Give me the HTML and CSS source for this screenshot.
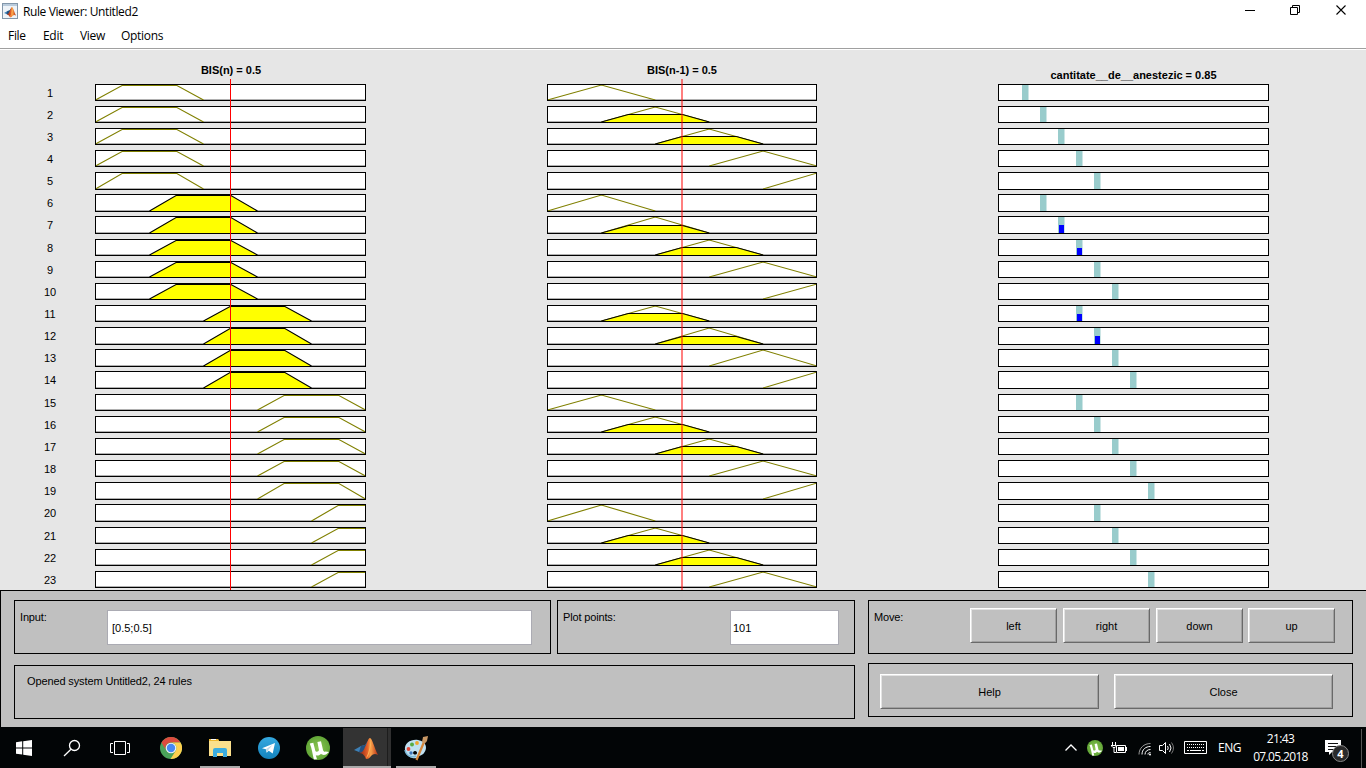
FILE: index.html
```html
<!DOCTYPE html>
<html lang="en">
<head>
<meta charset="utf-8">
<title>Rule Viewer: Untitled2</title>
<link rel="stylesheet" href="styles.css">
</head>
<body>
<svg class="defs" width="0" height="0" aria-hidden="true">
  <defs>
    <linearGradient id="flame" x1="0" y1="0" x2="1" y2="0"><stop offset="0" stop-color="#8a1f14"/><stop offset=".45" stop-color="#e5622a"/><stop offset=".62" stop-color="#f9a24a"/><stop offset="1" stop-color="#b52c14"/></linearGradient>
    <linearGradient id="sky" x1="0" y1="0" x2="0" y2="1"><stop offset="0" stop-color="#35a9e0"/><stop offset="1" stop-color="#1483bd"/></linearGradient>
    <radialGradient id="leaf"><stop offset="0" stop-color="#8cc652"/><stop offset="1" stop-color="#61a637"/></radialGradient>
    <symbol id="matlab" viewBox="0 0 24 22">
      <path d="M0 13l7-4 4-1 3-4 2-2-4 12-4 2-3-1z" fill="#3d7fb5"/>
      <path d="M7 9l4-1 3-4-2 7-4 5-3-1z" fill="#24507f"/>
      <path d="M5 16c3 0 5-3 6-6 2-3 3-9 5-9s4 9 8 17c-3-2-5-1-7 1-2 3-4 3-5 3-1-3-3-6-7-6z" fill="url(#flame)"/>
      <path d="M16 2c0 6 0 11-4 19 3-1 4-8 5-13z" fill="#fbb45a"/>
    </symbol>
    <symbol id="utorrent" viewBox="0 0 24 24">
      <circle cx="12" cy="12" r="12" fill="url(#leaf)"/>
      <path d="M3.800 7.500l3.500-.7 2.100 8.100c.4 1.500 3.800.8 3.500-1.200L11.400 6l3.600-.7 2 8.600c.3 1.400 1.500 2 2.600 1.700l3.400.5-3 2.400c-2 .8-4 .5-5-.7-1.200 1.700-3.600 2.300-5.200 1.400l1.200 4-3.100.3C6.500 18 6 13 3.800 7.500z" fill="#fff"/>
    </symbol>
  </defs>
</svg>

<main class="window">
  <header class="titlebar">
    <svg class="app-icon" width="16" height="16" viewBox="0 0 16 16"><rect x=".5" y=".5" width="15" height="15" fill="#eef3f8" stroke="#8296aa"/><path d="M1 2h14" stroke="#b9cbdc" stroke-width="2"/><use href="#matlab" x="1.500" y="3.500" width="13" height="11"/></svg>
    <h1 class="title">Rule Viewer: Untitled2</h1>
    <svg class="controls" width="110" height="20" viewBox="0 0 110 20" fill="none" stroke="#000"><path d="M0 10.500h10M45.500 7.500h7v7h-7zM47.500 7v-1.500h7v7H53"/><path d="M91.500 5.500l9 9m0-9l-9 9" stroke-width="1.100"/></svg>
  </header>
  <nav class="menu"><span class="m-file">File</span><span class="m-edit">Edit</span><span class="m-view">View</span><span class="m-options">Options</span></nav>

  <section class="figure">
    <div class="headings"><h2>BIS(n) = 0.5</h2><h2>BIS(n-1) = 0.5</h2><h2 class="output-heading">cantitate__de__anestezic = 0.85</h2></div>
    <div class="rules" id="rules"></div>
    <i class="marker first"></i><i class="marker second"></i>
  </section>

  <section class="panel">
    <div class="left-side">
      <div class="inputs">
        <div class="box input-box"><label>Input:</label><div class="field">[0.5;0.5]</div></div>
        <div class="box points-box"><label>Plot points:</label><div class="field">101</div></div>
      </div>
      <div class="box status">Opened system Untitled2, 24 rules</div>
    </div>
    <div class="right-side">
      <div class="box move-box"><label>Move:</label><div class="btn">left</div><div class="btn">right</div><div class="btn">down</div><div class="btn">up</div></div>
      <div class="box action-box"><div class="btn">Help</div><div class="btn">Close</div></div>
    </div>
  </section>
</main>

<footer class="taskbar">
  <div class="task"><svg width="16" height="16" viewBox="0 0 16 16" fill="#fff"><path d="M0 2.200L6.200 1.300v6.100H0zM7.200 1.200L16 0v7.400H7.200zM0 8.400h6.200v6.200L0 13.800zM7.200 8.400H16V16l-8.800-1.300z"/></svg></div>
  <div class="task narrow"><svg width="18" height="18" viewBox="0 0 18 18" fill="none" stroke="#fff" stroke-width="1.300"><circle cx="11.500" cy="6.500" r="5"/><path d="M8 10.200L1 17"/></svg></div>
  <div class="task narrow"><svg width="20" height="16" viewBox="0 0 20 16" fill="none" stroke="#fff"><path d="M4.500 1.500h11v13h-11zM3 3.500H.5v9H3M17 3.500h2.500v9H17"/></svg></div>
  <div class="task chrome"><svg width="22" height="22" viewBox="0 0 22 22"><circle cx="11" cy="11" r="11" fill="#4aa35a"/><path d="M1.500 5.500A11 11 0 0 1 20.500 5.500H11a5.500 5.500 0 0 0-5.200 7.500z" fill="#dc4b3e"/><path d="M20.500 5.500A11 11 0 0 1 10.500 22l5.200-8.300A5.500 5.500 0 0 0 11 5.500z" fill="#fdd04f"/><circle cx="11" cy="11" r="5.300" fill="#f3f3f3"/><circle cx="11" cy="11" r="4.200" fill="#4688f4"/></svg></div>
  <div class="task open"><svg width="22" height="19" viewBox="0 0 22 19"><path d="M0 1h9l1 2h12v15H0z" fill="#fbe08c"/><path d="M0 1h9l1 2H0z" fill="#efb92f"/><path d="M2 1.500h5" stroke="#fff"/><path d="M4 19v-7q0-2 2-2h10q2 0 2 2v7h-4v-4H8v4z" fill="#3bade0"/></svg></div>
  <div class="task"><svg width="22" height="22" viewBox="0 0 22 22"><circle cx="11" cy="11" r="11" fill="url(#sky)"/><path d="M4 11.200L17 6l-2.300 10.500-4-2.800-2 2-.8-3.500z" fill="#fff"/><path d="M8 12l6.500-4-4.300 5-1.400 2.500z" fill="#bfd9e8"/></svg></div>
  <div class="task"><svg width="24" height="24"><use href="#utorrent"/></svg></div>
  <div class="task open current"><svg width="24" height="22"><use href="#matlab"/></svg></div>
  <div class="task open paint"><svg width="26" height="26" viewBox="0 0 26 26"><path d="M2 15C1 8 8 4 15 5c8 1 10 8 6 13-2 3-5 2-6 4-2 3-12 1-13-7zm10 1a2 1.800 0 1 0 .1 0z" fill="#bfe1f2" fill-rule="evenodd"/><path d="M2 15c1 6 7 8 11 6" fill="none" stroke="#7db9d8" stroke-width="1.500"/><circle cx="5.500" cy="14" r="1.900" fill="#e3493a"/><circle cx="9" cy="9.500" r="2" fill="#58ad45"/><circle cx="14" cy="8" r="1.900" fill="#f1a52c"/><circle cx="8" cy="18" r="1.700" fill="#3c78bd"/><path d="M21 7l-7.500 18" stroke="#d6873a" stroke-width="2.200"/><path d="M19 7l1-5 5-1-1 5-2.500 3z" fill="#c99865"/></svg></div>
  <div class="tray">
    <svg class="chevron" width="12" height="8" viewBox="0 0 12 8" fill="none" stroke="#fff" stroke-width="1.300"><path d="M.5 6.500L6 1l5.500 5.500"/></svg>
    <svg class="torrent" width="16" height="16"><use href="#utorrent"/></svg>
    <svg class="battery" width="16" height="12" viewBox="0 0 16 12" fill="none" stroke="#fff"><path d="M5.500 3.500h9v7h-9zM15.500 5v4M1.500 0v3M4.500 0v3M0 3.500h5v1l-1 1H2L.5 4M3 5v5.500h2"/><path d="M7 5h6v4H7z" fill="#fff" stroke="none"/></svg>
    <svg class="wifi" width="14" height="14" viewBox="0 0 14 14" fill="none" stroke="#fff"><path d="M1 12.500C1 6 6 1.500 12.500 1.500" stroke="#999"/><path d="M4 12.500c0-5 3.500-8 8.500-8M7 12.500c0-3 2.300-5 5.500-5M10 12.500c0-1.500 1-2 2.500-2"/><circle cx="12" cy="12.500" r="1" fill="#fff" stroke="none"/></svg>
    <svg class="sound" width="17" height="14" viewBox="0 0 17 14" fill="none" stroke="#fff"><path d="M.5 4.500h3l3-3v11l-3-3h-3zM8.500 5q1.500 2 0 4M10.500 3q3 4 0 8"/><path d="M12.500 1.500q4 5.500 0 11" stroke="#777"/></svg>
    <svg class="keyboard" width="23" height="13" viewBox="0 0 23 13" fill="none" stroke="#fff"><path d="M.5.500h22v12H.5z"/><path d="M3 3.500h17M3 6.500h17" stroke-dasharray="1 1"/><path d="M3 9.500h2M6 9.500h11M18 9.500h2"/></svg>
    <span class="lang">ENG</span>
    <div class="clock"><span>21:43</span><span>07.05.2018</span></div>
    <div class="notice"><svg width="16" height="15" viewBox="0 0 16 15"><path d="M0 0h16v12H7l-3 3v-3H0z" fill="#fff"/><path d="M3 3.500h10M3 6.500h10M3 9.500h6" stroke="#111"/></svg><b>4</b></div>
    <i class="desktop-edge"></i>
  </div>
</footer>
<script src="rules.js"></script>
</body>
</html>
```

FILE: styles.css
```css
* { box-sizing: border-box; }
body { margin: 0; width: 1366px; height: 768px; overflow: hidden; background: #fff; color: #000; font: 11px/14px "Liberation Sans", Arial, sans-serif; display: flex; flex-direction: column; }
h1, h2 { margin: 0; }
svg { display: block; flex: none; }
.defs { position: absolute; }
.window { height: 727px; flex: none; display: flex; flex-direction: column; }

.titlebar { height: 24px; display: flex; align-items: flex-start; padding-left: 2px; }
.app-icon { margin-top: 3px; }
.title { font: 12px/16px "Open Sans", "Noto Sans", sans-serif; letter-spacing: -.39px; margin: 4px 0 0 5px; flex: 1; }
.controls { margin-right: 11px; }
.menu { height: 25px; display: flex; padding-left: 8px; font: 12px/16px "Open Sans", "Noto Sans", sans-serif; letter-spacing: -.3px; padding-top: 4px; border-bottom: 1px solid #a0a0a0; flex: none; }
.m-file { width: 35px; }
.m-edit { width: 37px; }
.m-view { width: 41px; }

.figure { height: 541px; flex: none; background: #e6e6e6; position: relative; overflow: hidden; border-top: 1px solid #fff; }
.headings { display: grid; grid-template-columns: 271px 270px 271px; column-gap: 181px; padding: 13px 0 0 95px; height: 34px; }
.headings h2 { font-size: 11px; line-height: 14px; text-align: center; white-space: nowrap; }
.headings h2:first-child { padding-left: 1px; }
.headings .output-heading { padding-top: 5px; }
.rule { display: grid; grid-template-columns: 46px 293px 451px 452px; align-items: start; padding-left: 27px; }
.rule span { text-align: center; line-height: 18px; }
.rule .plot-a { margin-left: 22px; }
.rule .plot-b { margin-left: 181px; }
.rule .plot-c { margin-left: 181px; }
.frame { fill: #fff; }
.outline { fill: none; stroke: #000; }
.base { stroke: #b0b0b0; }
.member { fill: none; stroke: #808000; stroke-width: 1.15; }
.fired { fill: #ff0; stroke: #000; stroke-width: 1.15; }
.spike { fill: #99cccc; }
.spike-edge { fill: #cce5e5; }
.level { fill: #00f; }
.marker { position: absolute; top: 29px; bottom: 0; }
.first { left: 230px; width: 1px; background: #f00; }
.second { left: 681px; width: 2px; background: rgba(255, 0, 0, .5); }

.panel { height: 137px; flex: none; background: #c0c0c0; border-top: 1px solid #000; border-left: 1px solid #000; display: flex; gap: 13px; padding: 9px 0 0 13px; }
.box { border: 1px solid #000; height: 54px; display: flex; }
.box label { padding-top: 9px; letter-spacing: -.15px; }
.left-side { width: 841px; }
.right-side { width: 485px; }
.inputs { display: flex; gap: 6px; }
.input-box { width: 537px; padding-left: 5px; }
.input-box label { width: 87px; }
.field { height: 35px; margin-top: 9px; border: 1px solid #ababb3; background: #fff; padding-left: 4px; line-height: 35px; }
.input-box .field { width: 425px; }
.points-box { width: 298px; padding-left: 5px; }
.points-box label { width: 167px; }
.points-box .field { width: 109px; padding-left: 2px; }
.status { margin-top: 11px; padding: 8px 12px; letter-spacing: -.12px; }
.btn { height: 35px; border: 1px solid; border-color: #fff #696969 #696969 #fff; box-shadow: inset 1px 1px #e3e3e3, inset -1px -1px #a0a0a0; text-align: center; line-height: 35px; }
.move-box { padding: 7px 0 0 5px; }
.move-box label { width: 96px; padding-top: 2px; }
.move-box .btn { width: 87px; margin-right: 6px; }
.move-box .btn:nth-of-type(3) { margin-right: 5px; }
.action-box { margin-top: 9px; padding: 10px 0 0 11px; gap: 15px; }
.action-box .btn { width: 219px; }

.taskbar { height: 41px; background: #020506; display: flex; color: #fff; }
.task { width: 49px; display: flex; align-items: center; justify-content: center; border-bottom: 2px solid transparent; padding-top: 2px; flex: none; }
.task:first-child, .narrow { width: 48px; }
.chrome { width: 53px; }
.open { border-bottom: 2px solid #aaa; width: 40px; }
.chrome + .open { margin-right: 4px; margin-left: 3px; }
.current { background: linear-gradient(90deg, #333 44px, #1d1d1d 44px, #1d1d1d 45px, #303030 45px); width: 48px; margin: 1px 5px 0 1px; padding-right: 2px; }
.tray { display: flex; align-items: center; flex: 1; justify-content: flex-end; font: 12px/18px "Open Sans", "Noto Sans", sans-serif; }
.torrent { margin-left: 10px; }
.battery { margin-left: 8px; }
.wifi { margin-left: 11px; margin-top: 2px; }
.sound { margin-left: 7px; }
.keyboard { margin-left: 8px; }
.lang { margin-left: 11px; width: 24px; letter-spacing: -.5px; }
.clock { margin-left: 11px; width: 55px; display: flex; flex-direction: column; align-items: center; letter-spacing: -.65px; white-space: nowrap; padding-top: 1px; }
.notice { margin-left: 17px; width: 25px; height: 25px; position: relative; }
.notice svg { margin-top: 5px; }
.notice b { position: absolute; left: 7px; top: 10px; width: 17px; height: 17px; border: 1px solid #888; border-radius: 50%; background: #2a2a2a; text-align: center; font-size: 11px; line-height: 15px; }
.desktop-edge { width: 1px; height: 39px; background: #555; margin: 2px 4px 0 11px; }
```

FILE: rules.js
```js
// [first input set, second input set, output position] for each visible rule
const rules = [
  [0,0,0],[0,1,1],[0,2,2],[0,3,3],[0,4,4],
  [1,0,1],[1,1,2],[1,2,3],[1,3,4],[1,4,5],
  [2,1,3],[2,2,4],[2,3,5],[2,4,6],
  [3,0,3],[3,1,4],[3,2,5],[3,3,6],[3,4,7],
  [4,0,4],[4,1,5],[4,2,6],[4,3,7]
];
const rowTop = i => Math.floor(84 + 22.15 * i);
const rowBottom = i => Math.floor(100.4 + 22.15 * i);

function plot(name, width, height, body) {
  return `<svg class="${name}" width="${width}" height="${height}" viewBox="0 0 ${width} ${height}">
    <rect class="frame" width="${width}" height="${height}"/>${body}
    <rect class="outline" x=".5" y=".5" width="${width - 1}" height="${height - 1}"/></svg>`;
}

function first(set, h) {
  const x = set * 54 + .5, b = h - 1;
  const base = `<path class="base" d="M1 ${h - 1.5}H270"/>`;
  const d = `M${x} ${b}L${x + 27} 1.300H${x + 81}L${x + 108} ${b}`;
  return base + `<path class="${set === 1 || set === 2 ? 'fired' : 'member'}" d="${d}"/>`;
}

function second(set, h) {
  const x = set * 53.9 + .5, b = h - 1, mid = h / 2;
  let out = `<path class="base" d="M1 ${h - 1.5}H269"/><path class="member" d="M${x} ${b}L${x + 53.9} 1L${x + 107.8} ${b}"/>`;
  if (set === 1 || set === 2) out += `<path class="fired" d="M${x} ${b}L${x + 27} ${Math.floor(mid) + .5}H${x + 81}L${x + 107.8} ${b}"/>`;
  return out;
}

function output(pos, fired, h) {
  const x = 24 + pos * 18;
  let out = `<rect class="spike" x="${x}" y="1" width="6" height="${h - 2}"/><rect class="spike-edge" x="${x + 6}" y="1" width="1" height="${h - 2}"/>`;
  if (fired) out += `<rect class="level" x="${x + 1}" y="${Math.ceil(h / 2)}" width="5" height="${h - 1 - Math.ceil(h / 2)}"/>`;
  return out;
}

document.getElementById('rules').innerHTML = rules.map(([a, b, c], i) => {
  const h = rowBottom(i) - rowTop(i) + 1;
  const fired = (a === 1 || a === 2) && (b === 1 || b === 2);
  return `<div class="rule" style="height:${rowTop(i + 1) - rowTop(i)}px"><span>${i + 1}</span>
    ${plot('plot-a', 271, h, first(a, h))}${plot('plot-b', 270, h, second(b, h))}${plot('plot-c', 271, h, output(c, fired, h))}</div>`;
}).join('');
```
